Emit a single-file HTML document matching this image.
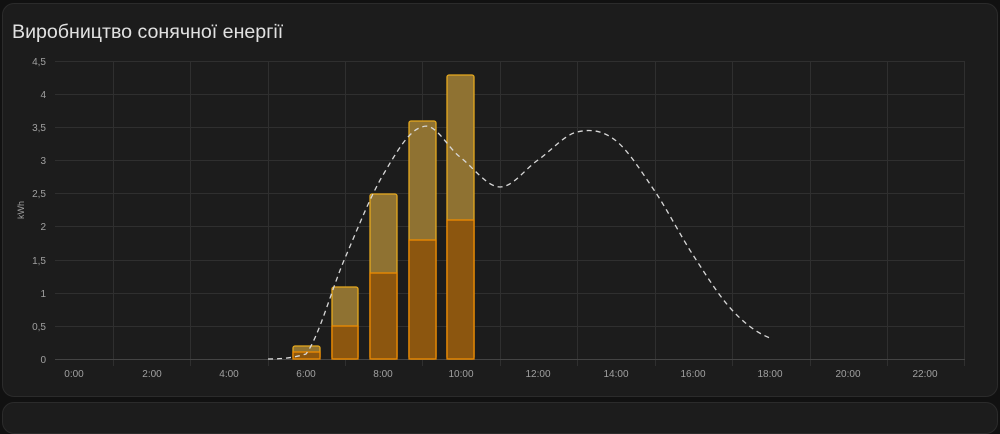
<!DOCTYPE html>
<html><head><meta charset="utf-8"><style>
html,body{margin:0;padding:0;background:#111;width:1000px;height:410px;overflow:hidden;font-family:"Liberation Sans","Noto Sans CJK SC",sans-serif}
.card{position:absolute;left:2px;top:3px;width:994px;height:392px;background:#1c1c1c;border:1px solid #2b2b2b;border-radius:12px}
.card2{position:absolute;left:2px;top:402px;width:994px;height:30px;background:#1c1c1c;border:1px solid #2b2b2b;border-radius:12px}
h1{position:absolute;left:12px;top:21px;margin:0;font-weight:400;font-size:19.6px;color:#e1e1e1}
svg{position:absolute;left:0;top:0}
</style></head><body>
<div class="card"></div><div class="card2"></div>
<h1>Виробництво сонячної енергії</h1>
<svg width="1000" height="410" font-family="Liberation Sans, sans-serif" font-size="10" fill="#a0a0a0">
<g stroke="#2f2f2f" stroke-width="1">
<line x1="55" y1="61.5" x2="965" y2="61.5"/><line x1="55" y1="94.5" x2="965" y2="94.5"/><line x1="55" y1="127.5" x2="965" y2="127.5"/><line x1="55" y1="160.5" x2="965" y2="160.5"/><line x1="55" y1="193.5" x2="965" y2="193.5"/><line x1="55" y1="226.5" x2="965" y2="226.5"/><line x1="55" y1="260.5" x2="965" y2="260.5"/><line x1="55" y1="293.5" x2="965" y2="293.5"/><line x1="55" y1="326.5" x2="965" y2="326.5"/>
<line x1="113.5" y1="61" x2="113.5" y2="366"/><line x1="190.5" y1="61" x2="190.5" y2="366"/><line x1="268.5" y1="61" x2="268.5" y2="366"/><line x1="345.5" y1="61" x2="345.5" y2="366"/><line x1="422.5" y1="61" x2="422.5" y2="366"/><line x1="500.5" y1="61" x2="500.5" y2="366"/><line x1="577.5" y1="61" x2="577.5" y2="366"/><line x1="655.5" y1="61" x2="655.5" y2="366"/><line x1="732.5" y1="61" x2="732.5" y2="366"/><line x1="810.5" y1="61" x2="810.5" y2="366"/><line x1="887.5" y1="61" x2="887.5" y2="366"/><line x1="964.5" y1="61" x2="964.5" y2="366"/>
</g>
<line x1="55" y1="359.5" x2="965" y2="359.5" stroke="#444"/>
<g text-anchor="end">
<text x="46" y="65">4,5</text><text x="46" y="98">4</text><text x="46" y="131">3,5</text><text x="46" y="164">3</text><text x="46" y="197">2,5</text><text x="46" y="230">2</text><text x="46" y="264">1,5</text><text x="46" y="297">1</text><text x="46" y="330">0,5</text><text x="46" y="363">0</text>
</g>
<text x="24" y="210" transform="rotate(-90 24 210)" text-anchor="middle" font-size="9">kWh</text>
<g text-anchor="middle">
<text x="74" y="377">0:00</text><text x="152" y="377">2:00</text><text x="229" y="377">4:00</text><text x="306" y="377">6:00</text><text x="383" y="377">8:00</text><text x="461" y="377">10:00</text><text x="538" y="377">12:00</text><text x="616" y="377">14:00</text><text x="693" y="377">16:00</text><text x="770" y="377">18:00</text><text x="848" y="377">20:00</text><text x="925" y="377">22:00</text>
</g>
<g stroke="#e6a91e" stroke-width="1.3" fill="#8f7232">
<rect x="293" y="346" width="27" height="13" rx="2"/>
<rect x="332" y="287" width="26" height="72" rx="2"/>
<rect x="370" y="194" width="27" height="165" rx="2"/>
<rect x="409" y="121" width="27" height="238" rx="2"/>
<rect x="447" y="75" width="27" height="284" rx="2"/>
</g>
<g stroke="#ee8a00" stroke-width="1.3" fill="#8c560f">
<rect x="293" y="352" width="27" height="7"/>
<rect x="332" y="326" width="26" height="33"/>
<rect x="370" y="273" width="27" height="86"/>
<rect x="409" y="240" width="27" height="119"/>
<rect x="447" y="220" width="27" height="139"/>
</g>
<path d="M268,359 C285,359 296,357 306,354 C319,337 332,288 345,258 C358,228 370,197 383,175 C396,153 409,130 422,127 C435,121 447,147 460,157 C473,167 487,187 500,187 C513,187 525,169 538,160 C551,151 564,135 577,132 C590,129 602,130 615,140 C628,150 641,171 654,190 C667,209 680,235 693,255 C706,275 719,296 732,310 C745,324 757,333 770,338" fill="none" stroke="#d8d8d8" stroke-width="1.3" stroke-dasharray="5,4"/>
</svg>
</body></html>
